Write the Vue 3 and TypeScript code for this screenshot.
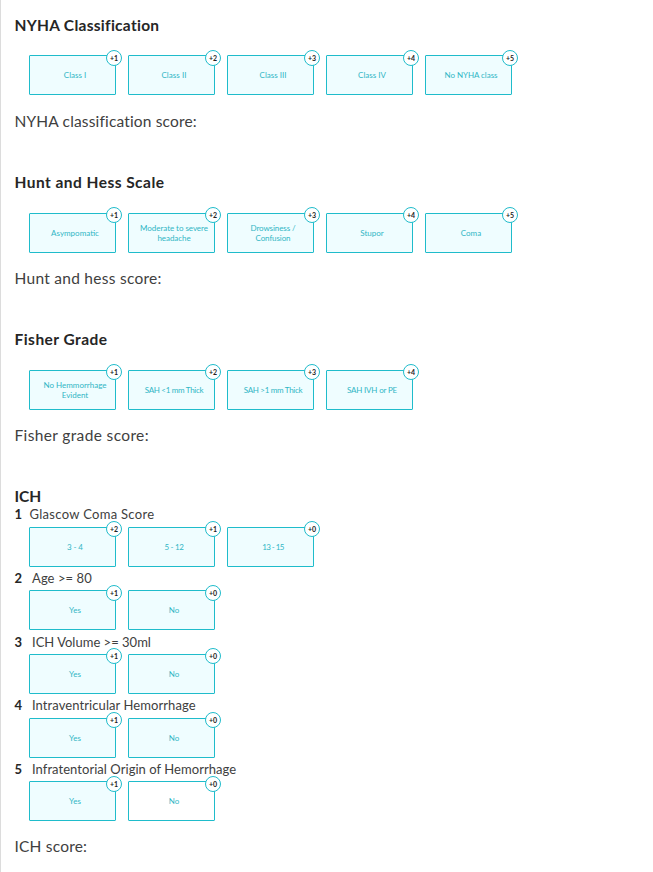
<script setup lang="ts">
interface Option { label: string; points: number; plain?: boolean; spacing?: number }
interface Scale { title: string; score: string; options: Option[]; titleSpacing: number; scoreSpacing: number }
interface Question { text: string; options: Option[]; spacing: number; indent: number }

const scales: Scale[] = [
  {
    title: 'NYHA Classification', score: 'NYHA classification score:', titleSpacing: 0.28, scoreSpacing: 0.16,
    options: [
      { label: 'Class I', points: 1 },
      { label: 'Class II', points: 2, spacing: 0.05 },
      { label: 'Class III', points: 3 },
      { label: 'Class IV', points: 4 },
      { label: 'No NYHA class', points: 5, spacing: -0.05 },
    ],
  },
  {
    title: 'Hunt and Hess Scale', score: 'Hunt and hess score:', titleSpacing: 0.46, scoreSpacing: 0.27,
    options: [
      { label: 'Asympomatic', points: 1 },
      { label: 'Moderate to severe\nheadache', points: 2, spacing: -0.05 },
      { label: 'Drowsiness /\nConfusion', points: 3, spacing: -0.1 },
      { label: 'Stupor', points: 4 },
      { label: 'Coma', points: 5 },
    ],
  },
  {
    title: 'Fisher Grade', score: 'Fisher grade score:', titleSpacing: 0.46, scoreSpacing: 0.36,
    options: [
      { label: 'No Hemmorrhage\nEvident', points: 1 },
      { label: 'SAH <1 mm Thick', points: 2, spacing: -0.3 },
      { label: 'SAH >1 mm Thick', points: 3, spacing: -0.3 },
      { label: 'SAH IVH or PE', points: 4, spacing: -0.18 },
    ],
  },
]

const yesNo = (plainNo = false): Option[] => [
  { label: 'Yes', points: 1 },
  { label: 'No', points: 0, plain: plainNo },
]

const questions: Question[] = [
  {
    text: 'Glascow Coma Score', spacing: 0.3, indent: 29.5,
    options: [
      { label: '3 - 4', points: 2, spacing: -0.1 },
      { label: '5 - 12', points: 1, spacing: -0.3 },
      { label: '13 - 15', points: 0, spacing: -0.6 },
    ],
  },
  { text: 'Age >= 80', spacing: 0.08, indent: 32, options: yesNo() },
  { text: 'ICH Volume >= 30ml', spacing: 0.01, indent: 32, options: yesNo() },
  { text: 'Intraventricular Hemorrhage', spacing: 0.08, indent: 32, options: yesNo() },
  { text: 'Infratentorial Origin of Hemorrhage', spacing: 0.05, indent: 32, options: yesNo(true) },
]

const px = (n = 0) => ({ letterSpacing: `${n}px` })
</script>

<template>
  <main class="page">
    <section v-for="scale in scales" :key="scale.title" class="scale">
      <h2 class="title"><span :style="px(scale.titleSpacing)">{{ scale.title }}</span></h2>
      <div class="options">
        <button v-for="o in scale.options" :key="o.label" type="button" class="option">
          <span class="label" :style="px(o.spacing)">{{ o.label }}</span>
          <span class="badge">+{{ o.points }}</span>
        </button>
      </div>
      <p class="score"><span :style="px(scale.scoreSpacing)">{{ scale.score }}</span></p>
    </section>

    <section class="ich">
      <h2 class="title">ICH</h2>
      <div v-for="(q, i) in questions" :key="q.text" class="question">
        <p class="prompt">
          <b class="number" :style="{ width: `${q.indent - 14.5}px` }">{{ i + 1 }}</b>
          <span :style="px(q.spacing)">{{ q.text }}</span>
        </p>
        <div class="options">
          <button v-for="o in q.options" :key="o.label" type="button" class="option" :class="{ plain: o.plain }">
            <span class="label" :style="px(o.spacing)">{{ o.label }}</span>
            <span class="badge">+{{ o.points }}</span>
          </button>
        </div>
      </div>
      <p class="score"><span :style="px(0.2)">ICH score:</span></p>
    </section>
  </main>
</template>

<style>
body {
  margin: 0;
  background: #fff;
}
</style>

<style scoped>
.page {
  box-sizing: border-box;
  height: 872px;
  overflow: hidden;
  padding: 15px 0 0 13.5px;
  border-left: 1px solid #dcdcdc;
  font-family: Lato, "Liberation Sans", sans-serif;
  font-variant-ligatures: none;
  color: #262626;
}
.scale {
  height: 157.2px;
}
.title {
  margin: 0;
  height: 20px;
  font-size: 15.5px;
  line-height: 20px;
  font-weight: 700;
  white-space: nowrap;
}
.options {
  display: flex;
  gap: 12px;
  padding-left: 14.5px;
}
.scale .options {
  padding-top: 20.4px;
}
.option {
  position: relative;
  box-sizing: border-box;
  display: flex;
  align-items: center;
  justify-content: center;
  width: 87px;
  height: 40px;
  margin: 0;
  padding: 0 0 0 5px;
  border: 1px solid #1fbccb;
  border-radius: 1px;
  background: #effdff;
  color: #2fb6c5;
  font: 400 8px/10px Lato, "Liberation Sans", sans-serif;
}
.option.plain {
  background: #fff;
}
.label {
  white-space: pre;
  text-align: center;
}
.badge {
  position: absolute;
  top: -6.6px;
  right: -7px;
  box-sizing: border-box;
  width: 16px;
  height: 16px;
  border: 1px solid #1fbccb;
  border-radius: 50%;
  background: #fff;
  color: #222;
  font-size: 7px;
  line-height: 14px;
  font-weight: 700;
  text-align: center;
}
.score {
  margin: 15.6px 0 0;
  font-size: 15.5px;
  line-height: 20px;
  color: #404040;
  white-space: nowrap;
}
.ich .title {
  height: 19.88px;
  line-height: 18.4px;
}
.question {
  height: 63.6px;
}
.prompt {
  display: flex;
  margin: 0;
  height: 20.35px;
  font-size: 13px;
  line-height: 16px;
  color: #404040;
  white-space: nowrap;
}
.number {
  flex: none;
  color: #262626;
  font-weight: 700;
}
.ich .score {
  margin-top: 11.2px;
}
</style>
